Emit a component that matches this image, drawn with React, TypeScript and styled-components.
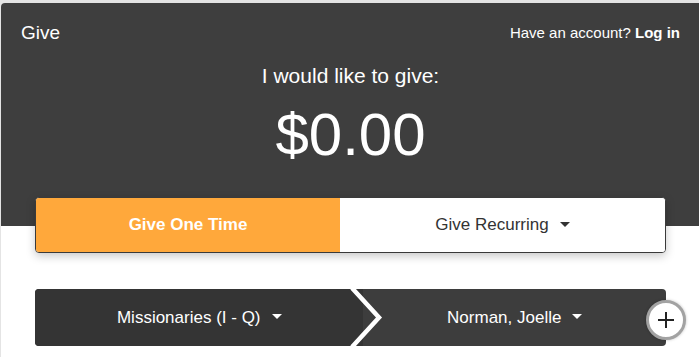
import React from 'react'
import styled, { createGlobalStyle } from 'styled-components'

const GlobalStyle = createGlobalStyle`
  html, body {
    margin: 0;
    padding: 0;
    background: #e4e4e4;
    font-family: "Liberation Sans", Arial, sans-serif;
  }
`

const Page = styled.div`
  margin: 3px 0 0 1px;
  min-height: 354px;
  background: #ffffff;
  border-top-left-radius: 4px;
  overflow: hidden;
`

const Header = styled.header`
  background: #3e3e3e;
  color: #ffffff;
  padding: 19px 19px 57px 20px;
`

const TopRow = styled.div`
  display: flex;
  justify-content: space-between;
  align-items: flex-start;
  height: 22px;
  line-height: 22px;
`

const Brand = styled.div`
  font-size: 19px;
`

const Account = styled.div`
  font-size: 15px;

  b {
    font-weight: 700;
  }
`

const Prompt = styled.div`
  margin-top: 20px;
  font-size: 21px;
  line-height: 24px;
  text-align: center;
`

const Amount = styled.div`
  margin-top: 12px;
  font-size: 60px;
  line-height: 69px;
  text-align: center;
`

const Toggle = styled.div`
  display: flex;
  height: 56px;
  box-sizing: border-box;
  margin: -29px 33px 0 34px;
  border: 1px solid #3a3a3a;
  border-radius: 4px;
  overflow: hidden;
  background: #ffffff;
  box-shadow: 0 3px 10px rgba(0, 0, 0, 0.22);
`

const ToggleOption = styled.div<{ $active?: boolean; $grow: number }>`
  flex: ${p => p.$grow} 1 0;
  display: flex;
  align-items: center;
  justify-content: center;
  font-size: 17px;
  font-weight: ${p => (p.$active ? 700 : 400)};
  background: ${p => (p.$active ? '#ffa83b' : '#ffffff')};
  color: ${p => (p.$active ? '#ffffff' : '#333333')};
`

const Caret = styled.span<{ $color: string }>`
  display: inline-block;
  margin-left: 11px;
  width: 0;
  height: 0;
  border-left: 5px solid transparent;
  border-right: 5px solid transparent;
  border-top: 5px solid ${p => p.$color};
  transform: translateY(-1px);
`

const FundBar = styled.div`
  position: relative;
  display: flex;
  height: 57px;
  margin: 36px 33px 0 34px;
  border-radius: 4px;
  background: #3d3d3d;
`

const FundSegment = styled.div<{ $grow: number; $dark?: boolean }>`
  position: relative;
  flex: ${p => p.$grow} 1 0;
  display: flex;
  align-items: center;
  justify-content: center;
  color: #ffffff;
  font-size: 17px;
  background: ${p => (p.$dark ? '#343434' : 'transparent')};
  border-radius: ${p => (p.$dark ? '4px 0 0 4px' : '0 4px 4px 0')};
`

const Chevron = styled.svg`
  position: absolute;
  top: 0;
  right: -24px;
  width: 40px;
  height: 57px;
`

const AddButton = styled.button`
  position: absolute;
  top: 11px;
  right: -20px;
  width: 40px;
  height: 40px;
  padding: 0;
  border: 3px solid #a2a2a2;
  border-radius: 50%;
  background: #ffffff;
  box-shadow: 0 0 3px rgba(0, 0, 0, 0.25);
  display: flex;
  align-items: center;
  justify-content: center;
`

export default function App() {
  return (
    <>
      <GlobalStyle />
      <Page>
        <Header>
          <TopRow>
            <Brand>Give</Brand>
            <Account>
              Have an account? <b>Log in</b>
            </Account>
          </TopRow>
          <Prompt>I would like to give:</Prompt>
          <Amount>$0.00</Amount>
        </Header>

        <Toggle>
          <ToggleOption $active $grow={304}>Give One Time</ToggleOption>
          <ToggleOption $grow={325}>
            Give Recurring
            <Caret $color="#333333" />
          </ToggleOption>
        </Toggle>

        <FundBar>
          <FundSegment $dark $grow={329}>
            Missionaries (I - Q)
            <Caret $color="#ffffff" />
            <Chevron viewBox="0 0 40 57">
              <polyline
                points="5,-1 32,28.5 5,58"
                fill="none"
                stroke="#ffffff"
                strokeWidth="4.5"
              />
            </Chevron>
          </FundSegment>
          <FundSegment $grow={303}>
            Norman, Joelle
            <Caret $color="#ffffff" />
          </FundSegment>
          <AddButton aria-label="Add fund">
            <svg width="18" height="18" viewBox="0 0 18 18">
              <path d="M9 1v16M1 9h16" stroke="#222222" strokeWidth="2" />
            </svg>
          </AddButton>
        </FundBar>
      </Page>
    </>
  )
}
